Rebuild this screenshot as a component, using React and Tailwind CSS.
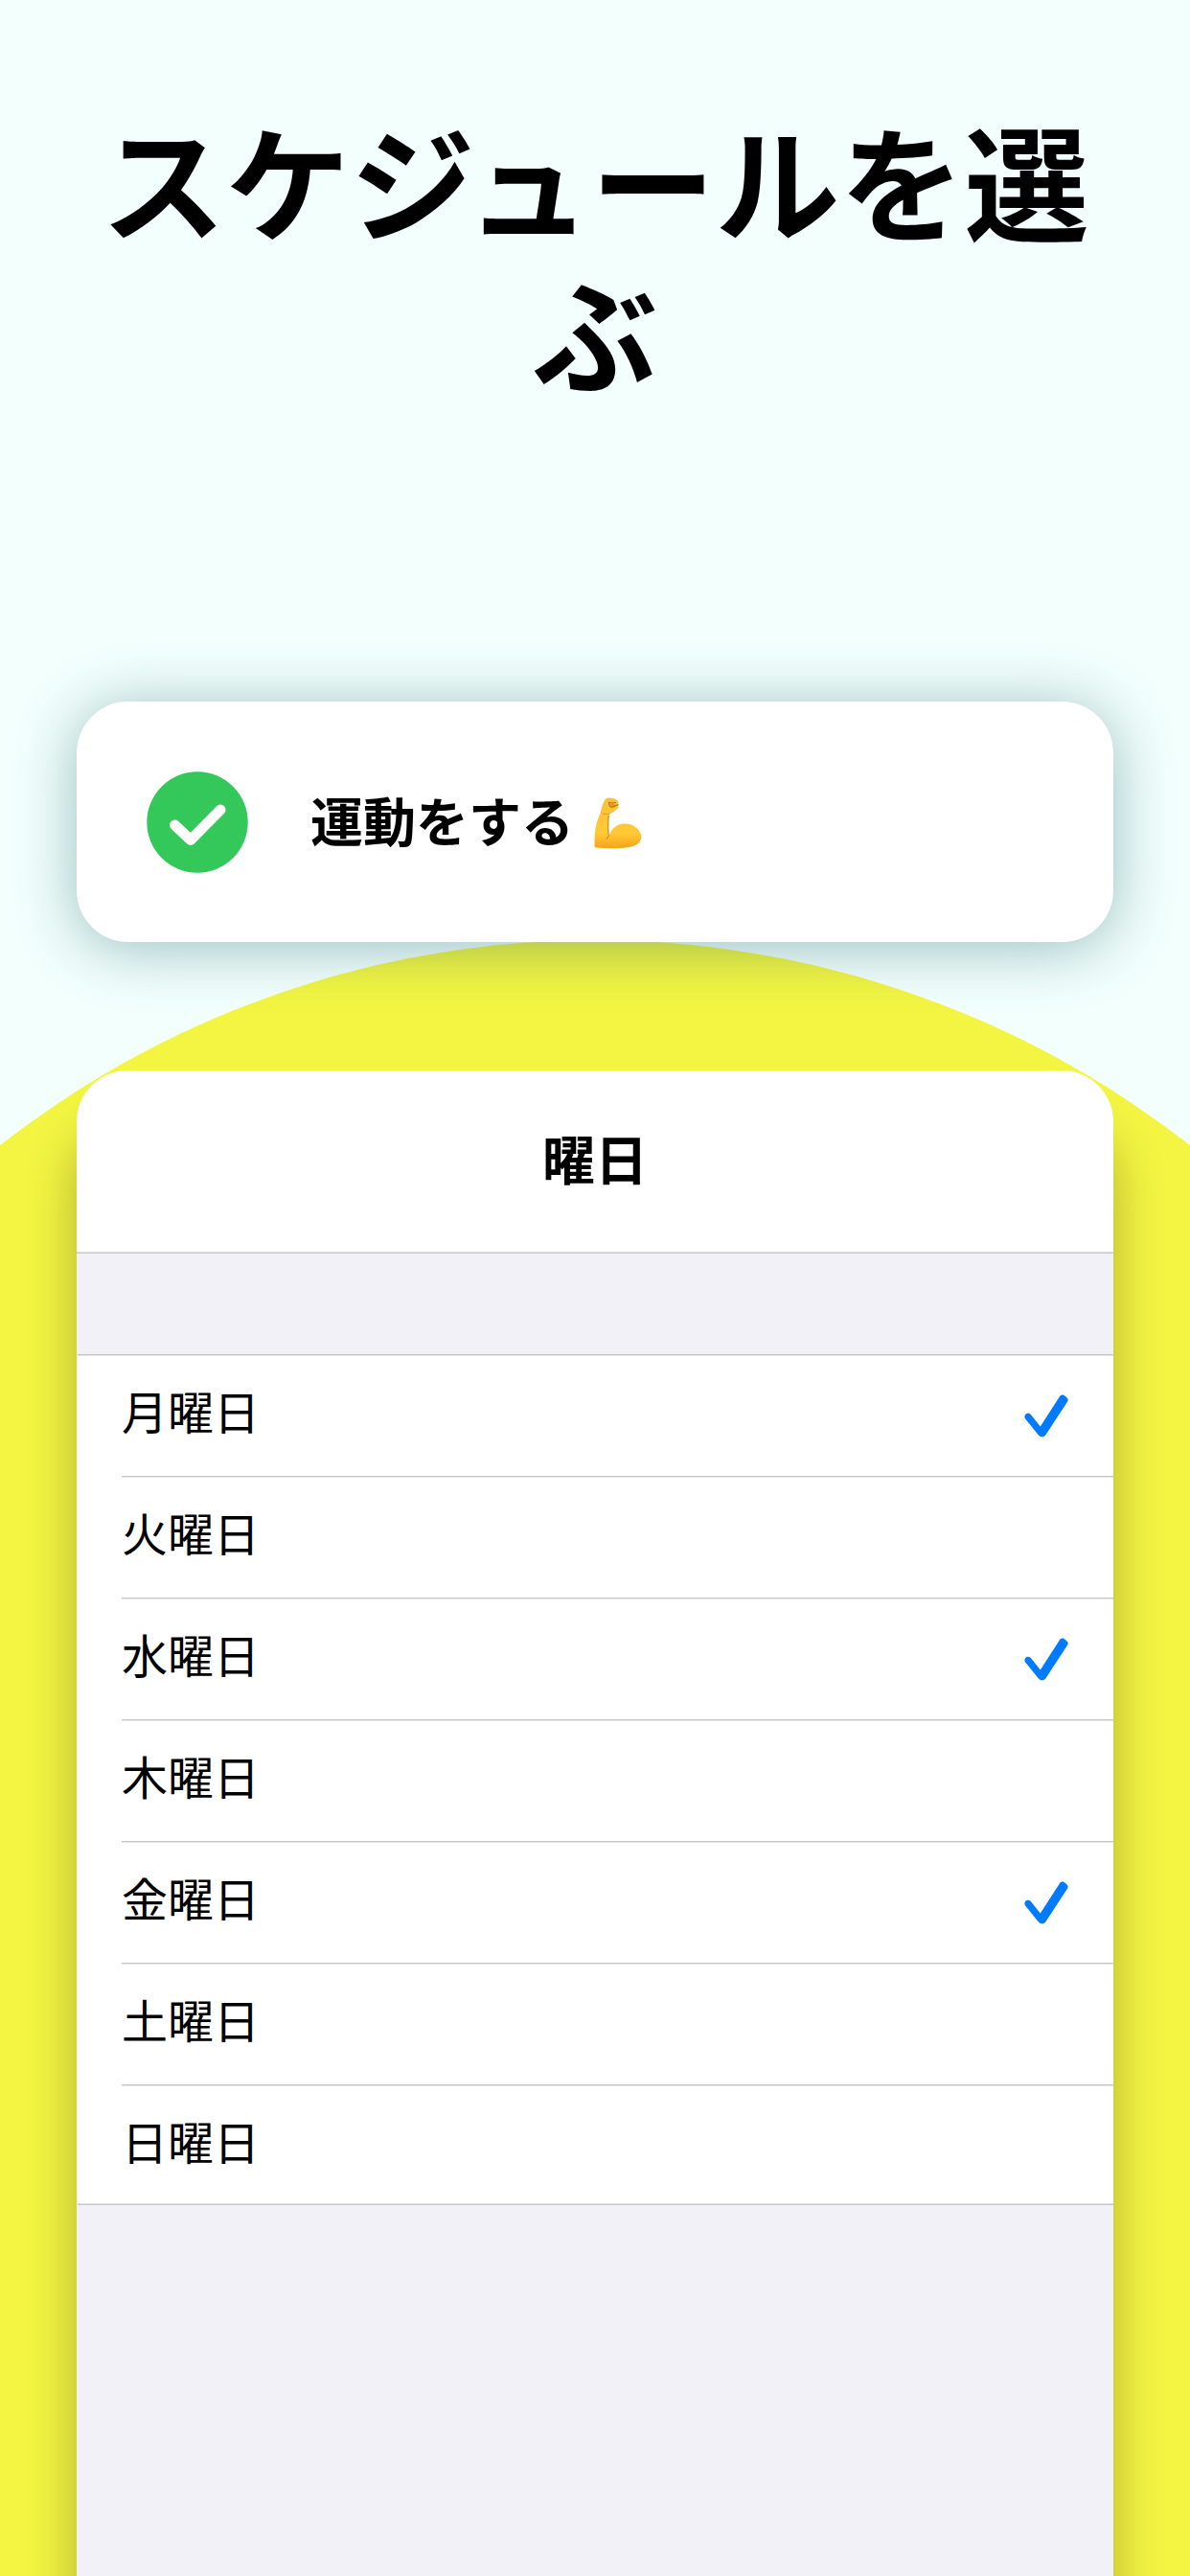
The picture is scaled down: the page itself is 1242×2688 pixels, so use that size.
import React from "react";

const DAYS = [
  { name: "月曜日", selected: true },
  { name: "火曜日", selected: false },
  { name: "水曜日", selected: true },
  { name: "木曜日", selected: false },
  { name: "金曜日", selected: true },
  { name: "土曜日", selected: false },
  { name: "日曜日", selected: false },
];

function DoneBadge() {
  return (
    <svg viewBox="0 0 106 106" className="size-[106px] shrink-0">
      <circle cx="53" cy="53" r="52.7" fill="#34c759" />
      <path
        d="M29.5 56 L46 71.5 L77 40"
        fill="none"
        stroke="#fff"
        strokeWidth="11"
        strokeLinecap="round"
        strokeLinejoin="round"
      />
    </svg>
  );
}

function Tick() {
  return (
    <svg viewBox="0 0 46 46" className="h-[46px] w-[46px]">
      <path
        d="M0.9 25.2 C-1 21.500 3 17.800 6.600 20.700 L16.800 33.500 L36.500 3 C38.500 -0.500 41 0.400 43 2.200 C45.500 4 46.500 5.500 44.800 8 L22.600 42 C20.600 45 17 45 14.900 42.500 Z"
        fill="#007aff"
      />
    </svg>
  );
}

function FlexedArm() {
  return (
    <svg viewBox="0 0 50 54" className="mt-[3px] h-[54px] w-[50px]">
      <defs>
        <linearGradient id="skin" x1="0" y1="0" x2="0" y2="1">
          <stop offset="0" stopColor="#fbc03a" />
          <stop offset="0.7" stopColor="#ffc934" />
          <stop offset="1" stopColor="#f0a51b" />
        </linearGradient>
      </defs>
      <path
        d="M11.500 2.500 C13 0.300 15.500 0.200 18 0.800 C21 1.500 24 2 25.200 4 C26.200 5.500 25 6 25.200 7.500 C27 10.500 23.500 12.500 21 14.500 C19 16.500 17 17 16 17.500 C15 24 15 33 15.500 40.500 C18 33 24 27.500 31 27.500 C41 27 48 33.500 49.300 40 C50 48 43 51 35 52.300 C25 54 12 53.300 2 52.500 C0.500 52.500 0.300 51 0.500 49 C0.500 36 1.500 27 6.500 17 C7.500 12 9 6 11.500 2.500 Z"
        fill="url(#skin)"
      />
      <path
        d="M7.500 15.500 C10 18.500 14.500 18 17 16.500"
        fill="none"
        stroke="#e29a26"
        strokeWidth="1"
      />
      <path
        d="M15.200 19 C14.500 28 14.600 35 15.300 41 L12.500 43.500"
        fill="none"
        stroke="#c98012"
        strokeWidth="1"
      />
      <path
        d="M15.500 5.500 L19 6 L22.500 5.500 M15.800 6 C15.500 9 17 10.500 20 10 L25 7.500 M18 8 L21 8"
        fill="none"
        stroke="#b0690f"
        strokeWidth="1.100"
        strokeLinecap="round"
      />
    </svg>
  );
}

function DayRow({ name, selected, last }) {
  return (
    <li className="flex pl-[46px]">
      <div
        className={`flex flex-1 items-center justify-between pr-[47px] ${
          last
            ? "h-[123px] pt-[3px]"
            : "h-[127px] border-b border-[#e6e6e8] shadow-[inset_0_-1px_0_#c6c6c8]"
        }`}
      >
        <span className="-translate-y-[7px] text-[48px] leading-none">
          {name}
        </span>
        {selected && <Tick />}
      </div>
    </li>
  );
}

export default function App() {
  return (
    <div className="relative flex h-[2688px] w-[1242px] flex-col items-center overflow-hidden bg-[#f2fffd] font-['Noto_Sans_CJK_JP',sans-serif] text-black">
      {/* Yellow disc behind the cards */}
      <div className="absolute top-[981px] left-1/2 size-[2016px] -translate-x-1/2 rounded-full bg-[#f3f542]" />

      <h1 className="relative h-[732px] w-[1082px] shrink-0 pt-[106px] text-center text-[130px] leading-[158px] font-bold">
        スケジュールを選ぶ
      </h1>

      <section className="relative flex h-[251px] w-[1082px] shrink-0 items-center rounded-[54px] bg-white pl-[73px] shadow-[0_6px_62px_rgba(30,100,105,0.42)]">
        <DoneBadge />
        <div className="ml-[65px] flex items-center gap-[21px]">
          <span className="-translate-y-[3px] text-[55px] leading-none font-bold">
            運動をする
          </span>
          <FlexedArm />
        </div>
      </section>

      <section className="relative mt-[134px] flex w-[1082px] flex-1 flex-col rounded-t-[54px] bg-[#f2f1f7] shadow-[0_62px_52px_rgba(0,0,0,0.28)]">
        <header className="flex h-[191px] shrink-0 items-center justify-center rounded-t-[54px] border-b border-[#c6c6c8] bg-white shadow-[inset_0_-1px_0_#e3e3e5]">
          <h2 className="-translate-y-[5px] text-[55px] leading-none font-bold">
            曜日
          </h2>
        </header>
        <ul className="mt-[105px] ml-px border-y border-[#c6c6c8] bg-white pt-px shadow-[inset_0_1px_0_#e3e3e5,inset_0_-1px_0_#e3e3e5]">
          {DAYS.map((day, i) => (
            <DayRow key={day.name} {...day} last={i === DAYS.length - 1} />
          ))}
        </ul>
      </section>
    </div>
  );
}
